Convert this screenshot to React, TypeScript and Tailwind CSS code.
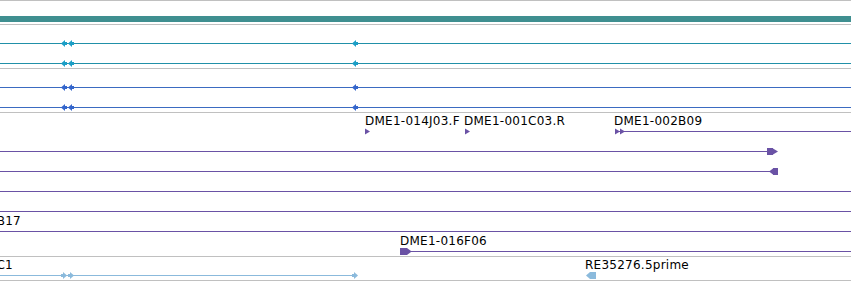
import React from 'react';

const W = 851;

// track colours
const TEAL = '#2190a8';
const TEAL_ARROW = '#1c9ec6';
const BLUE = '#3b6bc1';
const BLUE_ARROW = '#3566cc';
const PURPLE = '#6a52a5';
const LIGHT = '#8bbadc';

type Label = { x: number; text: string; endAt?: boolean };

const Line = ({ x1, x2, color }: { x1: number; x2: number; color: string }) => (
  <rect x={x1} y={18} width={x2 - x1} height={1} fill={color} shapeRendering="crispEdges" />
);

// small arrow glyph, tip on the left
const LeftArrow = ({ x, color }: { x: number; color: string }) => (
  <g fill={color}>
    <polygon points={`${x},18.5 ${x + 4},15 ${x + 4},22`} />
    <rect x={x + 4} y={17} width={2} height={3} shapeRendering="crispEdges" />
  </g>
);

// small arrow glyph, tip on the right
const RightArrow = ({ x, color }: { x: number; color: string }) => (
  <g fill={color}>
    <rect x={x} y={17} width={2} height={3} shapeRendering="crispEdges" />
    <polygon points={`${x + 2},15 ${x + 6},18.5 ${x + 2},22`} />
  </g>
);

const Tri = ({ x, color }: { x: number; color: string }) => (
  <polygon points={`${x},15.5 ${x + 5},18.5 ${x},21.5`} fill={color} />
);

const Row = ({ children, labels = [] }: { children?: React.ReactNode; labels?: Label[] }) => (
  <div className="relative h-5">
    <svg
      className="absolute left-0 top-0 h-5 w-[851px] max-w-none overflow-visible"
      width={W}
      height={20}
      viewBox={`0 0 ${W} 20`}
    >
      {children}
    </svg>
    {labels.map((l) => (
      <span
        key={l.text}
        className={`absolute top-[1px] whitespace-nowrap text-[12px] leading-[14px] tracking-[0.25px] text-black ${l.endAt ? '-translate-x-full' : ''}`}
        style={{ left: l.x }}
      >
        {l.text}
      </span>
    ))}
  </div>
);

const Track = ({ children }: { children: React.ReactNode }) => (
  <div className="border-b border-[#c0c0c0] pb-[3px]">{children}</div>
);

export default function App() {
  return (
    <div
      className="h-[281px] w-[851px] overflow-hidden bg-white"
      style={{ fontFamily: '"DejaVu Sans", sans-serif' }}
    >
      {/* ruler / overview bar */}
      <div className="border-y border-[#c0c0c0] pt-[15px] pb-[2px]">
        <div className="h-[6px] bg-[#3f8f90]" />
      </div>

      {/* teal track */}
      <Track>
        {[0, 1].map((i) => (
          <Row key={i}>
            <Line x1={0} x2={W} color={TEAL} />
            <LeftArrow x={61} color={TEAL_ARROW} />
            <LeftArrow x={68} color={TEAL_ARROW} />
            <LeftArrow x={352} color={TEAL_ARROW} />
          </Row>
        ))}
      </Track>

      {/* blue track */}
      <Track>
        {[0, 1].map((i) => (
          <Row key={i}>
            <Line x1={0} x2={W} color={BLUE} />
            <LeftArrow x={61} color={BLUE_ARROW} />
            <LeftArrow x={68} color={BLUE_ARROW} />
            <LeftArrow x={352} color={BLUE_ARROW} />
          </Row>
        ))}
      </Track>

      {/* purple track */}
      <Track>
        <Row
          labels={[
            { x: 365, text: 'DME1-014J03.F' },
            { x: 464, text: 'DME1-001C03.R' },
            { x: 614, text: 'DME1-002B09' },
          ]}
        >
          <Tri x={365} color={PURPLE} />
          <Tri x={465} color={PURPLE} />
          <Line x1={615} x2={W} color={PURPLE} />
          <Tri x={615} color={PURPLE} />
          <Tri x={620} color={PURPLE} />
        </Row>
        <Row>
          <Line x1={0} x2={770} color={PURPLE} />
          <rect x={767} y={15} width={6} height={7} fill={PURPLE} shapeRendering="crispEdges" />
          <polygon points="773,15.5 778,18.5 773,21.5" fill={PURPLE} />
        </Row>
        <Row>
          <Line x1={0} x2={772} color={PURPLE} />
          <polygon points="769,18.5 773,15.5 773,21.5" fill={PURPLE} />
          <rect x={773} y={15} width={5} height={7} fill={PURPLE} shapeRendering="crispEdges" />
        </Row>
        <Row>
          <Line x1={0} x2={W} color={PURPLE} />
        </Row>
        <Row>
          <Line x1={0} x2={W} color={PURPLE} />
        </Row>
        <Row labels={[{ x: 21, text: 'DME1-010B17', endAt: true }]}>
          <Line x1={0} x2={W} color={PURPLE} />
        </Row>
        <Row labels={[{ x: 400, text: 'DME1-016F06' }]}>
          <Line x1={405} x2={W} color={PURPLE} />
          <polygon points="400,15 407,15 411,18 411,19 407,22 400,22" fill={PURPLE} />
        </Row>
      </Track>

      {/* light blue track */}
      <Track>
        <Row
          labels={[
            { x: 13, text: 'RE02211.C1', endAt: true },
            { x: 585, text: 'RE35276.5prime' },
          ]}
        >
          <Line x1={0} x2={357} color={LIGHT} />
          <RightArrow x={61} color={LIGHT} />
          <RightArrow x={68} color={LIGHT} />
          <RightArrow x={352} color={LIGHT} />
          <polygon points="586,18.5 590,15 590,22" fill={LIGHT} />
          <rect x={590} y={15} width={6} height={7} fill={LIGHT} shapeRendering="crispEdges" />
        </Row>
      </Track>
    </div>
  );
}
